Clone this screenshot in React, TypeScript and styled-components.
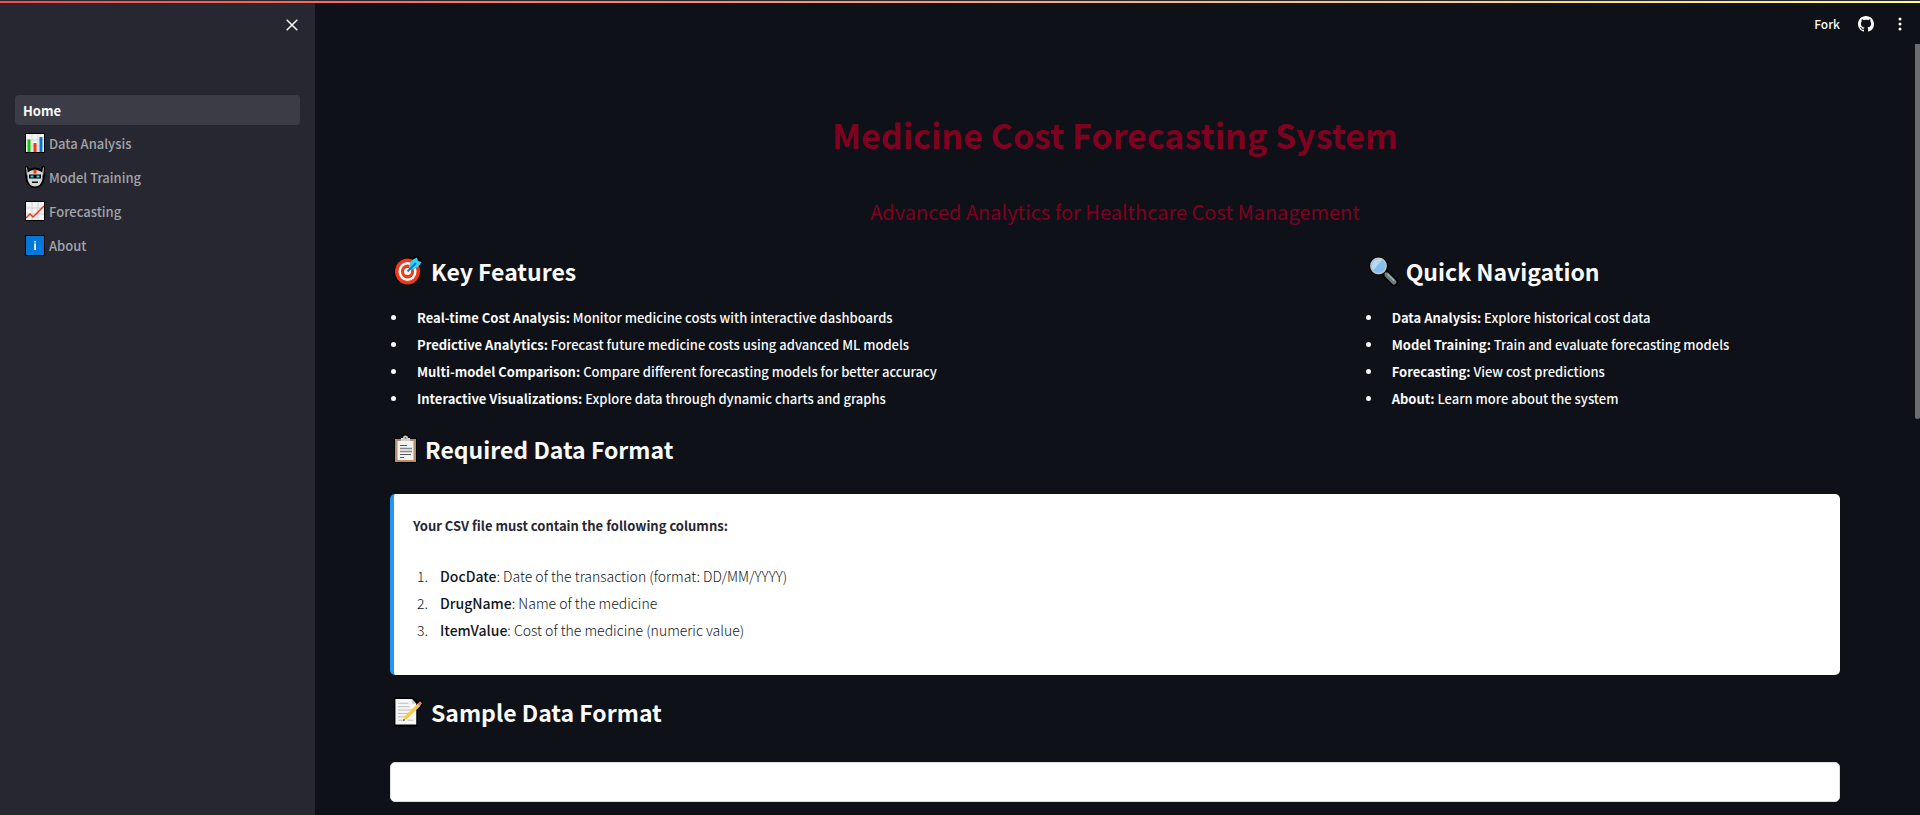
import React from "react";
import styled, { createGlobalStyle } from "styled-components";

const GlobalStyle = createGlobalStyle`
  * { box-sizing: border-box; }
  html, body, #root { height: 100%; }
  body {
    margin: 0;
    overflow: hidden;
    background: #0e1117;
    color: #fafafa;
    font-family: "Noto Sans CJK JP", "Noto Sans", sans-serif;
    font-size: 13px;
    font-weight: 500;
    line-height: 27px;
  }
  strong { font-weight: 700; }
`;

const Shell = styled.div`
  position: relative;
  display: flex;
  height: 100vh;
  overflow: hidden;
`;

const Decoration = styled.div`
  position: absolute;
  top: 0;
  left: 0;
  right: 0;
  height: 3px;
  border-top: 1px solid #262730;
  background: linear-gradient(90deg, #ff4b4b, #fffd80);
`;

const Sidebar = styled.aside`
  flex: 0 0 315px;
  padding: 14px 15px;
  background: #262730;
`;

const SidebarTop = styled.div`
  display: flex;
  justify-content: flex-end;
  height: 81px;
`;

const IconButton = styled.button`
  display: flex;
  align-items: center;
  justify-content: center;
  width: 16px;
  height: 22px;
  padding: 0;
  border: 0;
  background: none;
  color: #fafafa;
  cursor: pointer;
`;

const PageNav = styled.nav`
  display: flex;
  flex-direction: column;
  gap: 2px;
`;

const PageLink = styled.a<{ $active?: boolean }>`
  display: flex;
  align-items: center;
  gap: 4px;
  height: ${(p) => (p.$active ? 30 : 32)}px;
  padding: 0 ${(p) => (p.$active ? 8 : 10)}px;
  border-radius: 4px;
  background: ${(p) => (p.$active ? "#3c3c47" : "transparent")};
  color: ${(p) => (p.$active ? "#fafafa" : "#a3a4a9")};
  font-weight: ${(p) => (p.$active ? 700 : 500)};
  text-decoration: none;
`;

const Main = styled.main`
  flex: 1;
  min-width: 0;
  padding: 0 80px 0 75px;
`;

const Toolbar = styled.header`
  display: flex;
  align-items: center;
  justify-content: flex-end;
  gap: 18px;
  height: 48px;
  margin-right: -68px;
`;

const ForkButton = styled(IconButton)`
  width: auto;
  font: 500 12px/22px "Noto Sans CJK JP", "Noto Sans", sans-serif;
`;

const Title = styled.h1`
  margin: 64px 0 0;
  color: #800020;
  font-size: 34px;
  font-weight: 700;
  line-height: 46px;
  text-align: center;
`;

const Subtitle = styled.p`
  margin: 36px 0 0;
  color: #800020;
  font-size: 20px;
  font-weight: 400;
  line-height: 36px;
  text-align: center;
`;

const Columns = styled.div`
  display: grid;
  grid-template-columns: 2fr 1fr;
  gap: 24px;
  margin-top: 23px;
`;

const SectionTitle = styled.h2`
  display: flex;
  align-items: center;
  gap: 8px;
  height: 36px;
  margin: 0;
  padding-left: 4px;
  font-size: 23px;
  font-weight: 700;
  line-height: 36px;
`;

const FeatureList = styled.ul`
  margin: 15px 0 0;
  padding: 0;
  list-style: none;
`;

const FeatureItem = styled.li`
  display: flex;
  align-items: center;

  &::before {
    content: "";
    flex: none;
    width: 5px;
    height: 5px;
    margin: 0 21px 0 1px;
    border-radius: 50%;
    background: #fafafa;
  }
`;

const Block = styled.section`
  margin-top: 19px;
`;

const InfoCard = styled.div`
  margin-top: 27px;
  padding: 18px 19px 31px;
  border-left: 4px solid #2196f3;
  border-radius: 5px;
  background: #fff;
  color: #14151b;
`;

const CardLead = styled.p`
  margin: 0 0 24px;
  font-weight: 700;
  color: #262730;
`;

const ColumnList = styled.ol`
  margin: 0;
  padding: 0 0 0 4px;
  list-style: none;
  counter-reset: column;
  font-size: 14px;
  font-weight: 300;
`;

const ColumnItem = styled.li`
  display: flex;
  counter-increment: column;

  &::before {
    content: counter(column) ".";
    flex: 0 0 23px;
  }
`;

const ColumnName = styled.strong`
  font-weight: 500;
`;

const SampleCard = styled.div`
  height: 40px;
  margin-top: 32px;
  border: 1px solid #ddd;
  border-radius: 5px;
  background: #fff;
`;

const ScrollThumb = styled.div`
  position: absolute;
  top: 44px;
  right: 0;
  width: 5px;
  height: 46vh;
  border-radius: 0 0 3px 3px;
  background: #6b6c70;
`;

const ChartIcon = () => (
  <svg width="20" height="20" viewBox="0 0 20 20" aria-hidden="true">
    <rect width="20" height="20" rx="1" fill="#000" />
    <rect x="1" y="1" width="18" height="18" fill="#f3f3f3" />
    <path d="M7 1v18M13 1v18M1 7h18M1 13h18" stroke="#d8d8d8" />
    <path d="M2.500 6.500h3V19h-3z" fill="#16c60c" />
    <path d="M8.500 10h3v9h-3z" fill="#f03a17" />
    <path d="M14.500 4h3v15h-3z" fill="#0078d7" />
  </svg>
);

const RobotIcon = () => (
  <svg width="20" height="22" viewBox="0 0 20 22" aria-hidden="true">
    <path d="M0 0h3l1 3q6-3 12 0l1-3h3v9l-1 6q-2 7-9 7t-9-7L0 9z" fill="#000" />
    <path d="M1 1.500h1l1 6-1 3zM19 1.500h-1l-1 6 1 3z" fill="#c4c4c4" />
    <path d="M2.500 6.500Q10 1 17.500 6.500V13q-1.500 7.500-7.500 7.500T2.500 13z" fill="#d6d6d6" />
    <path d="M8.500 3.500h3v4h-3z" fill="#f03a17" />
    <path d="M4 8.500h12v4H4z" fill="#000" />
    <path d="M5.500 9.500h3v2h-3zM11.500 9.500h3v2h-3z" fill="#31d2f7" />
    <path d="M7 15.500h6v1.500H7z" fill="#111" />
  </svg>
);

const TrendIcon = () => (
  <svg width="20" height="20" viewBox="0 0 20 20" aria-hidden="true">
    <rect width="20" height="20" rx="1" fill="#000" />
    <rect x="1" y="1" width="18" height="18" fill="#f3f3f3" />
    <path d="M7 1v18M13 1v18M1 7h18M1 13h18" stroke="#d0d0d0" />
    <path d="M1 17l4-4 3 3L19 5" fill="none" stroke="#f03a17" strokeWidth="1.500" />
  </svg>
);

const InfoIcon = () => (
  <svg width="20" height="21" viewBox="0 0 20 21" aria-hidden="true">
    <rect width="20" height="21" rx="1" fill="#000" />
    <rect x="1" y="1" width="18" height="19" fill="#0078d7" />
    <path d="M9.200 6h1.700v1.500H9.200zM9.200 8.500h1.700v6.500H9.200z" fill="#fff" />
  </svg>
);

const TargetIcon = () => (
  <svg width="29" height="30" viewBox="0 0 29 30" aria-hidden="true">
    <path d="M14 1.500l9-1.500 3 1 2 4-3 5 1 8q-2 11-12 12Q1 29 0 16 2 3 14 1.500z" fill="#000" />
    <ellipse cx="13.500" cy="15.500" rx="12.500" ry="13" fill="#f03a17" />
    <ellipse cx="13.500" cy="15.500" rx="9" ry="9.500" fill="#fff" />
    <ellipse cx="13.500" cy="15.500" rx="6.500" ry="7" fill="#f03a17" />
    <circle cx="13.500" cy="15.500" r="3.500" fill="#fff" />
    <path d="M15 10q1-6 8-8.500l1 3.500 3.500 1Q25 12 18 13.500l-3-.5z" fill="#31d2f7" />
    <path d="M13.500 15.500L22 7" stroke="#0078d7" strokeWidth="1.800" />
  </svg>
);

const SearchIcon = () => (
  <svg width="29" height="30" viewBox="0 0 29 30" aria-hidden="true">
    <path d="M15 16l10 10" stroke="#000" strokeWidth="8" strokeLinecap="round" />
    <circle cx="9.500" cy="10" r="9.500" fill="#000" />
    <path d="M16 17l2 2" stroke="#aaa" strokeWidth="2" />
    <path d="M18 19l7 7" stroke="#6d7a7e" strokeWidth="5" strokeLinecap="round" />
    <path d="M18.500 18l7 7" stroke="#a4afb2" strokeWidth="1.500" />
    <circle cx="9.500" cy="10" r="7.700" fill="#83beec" stroke="#c9c9c9" strokeWidth="1.400" />
    <path d="M3 12Q2 4 10 3h4L4.500 14z" fill="#b3daf7" />
  </svg>
);

const ClipboardIcon = () => (
  <svg width="23" height="30" viewBox="0 0 23 30" aria-hidden="true">
    <path d="M0 4h7q1-4 4.500-4T16 4h7v25H0z" fill="#000" />
    <path d="M1 5h21v23H1z" fill="#b58f67" />
    <path d="M3.500 7h16v19h-16z" fill="#f2f2f2" />
    <path d="M7 7V4h2q0-2.500 2.500-2.500T14 4h2v3z" fill="#cfcfcf" />
    <circle cx="11.500" cy="4" r="1" fill="#777" />
    <path d="M6 11.500h7M6 20.500h11M6 23.500h4" stroke="#555" />
    <path d="M6 14.500h12M6 17.500h12" stroke="#888" strokeWidth="1.500" />
  </svg>
);

const MemoIcon = () => (
  <svg width="29" height="30" viewBox="0 0 30 30" aria-hidden="true">
    <path d="M0 0h21l3 4 3-2 3 2-1 4-5 6v16H0z" fill="#000" />
    <path d="M1.500 1.500h17l4.500 5V28h-21.500z" fill="#f7f7f7" />
    <path d="M18.500 1.500v5H23z" fill="#ccc" />
    <path d="M4 6h11M4 9.500h12M4 13h15M4 16.500h13M4 20h10M4 23.500h5M14 23.500h6" stroke="#bbb" />
    <path d="M9 24l2-4.500L25 6l2.500 2.500L13.500 22z" fill="#ffc83d" />
    <path d="M24.500 6.500L27 4l2 2-2.500 3z" fill="#d8837f" />
    <path d="M9 24.500l1-2.500 1.500 1.500z" fill="#555" />
  </svg>
);

const pages = [
  { label: "Data Analysis", Icon: ChartIcon },
  { label: "Model Training", Icon: RobotIcon },
  { label: "Forecasting", Icon: TrendIcon },
  { label: "About", Icon: InfoIcon },
];

const features = [
  ["Real-time Cost Analysis", "Monitor medicine costs with interactive dashboards"],
  ["Predictive Analytics", "Forecast future medicine costs using advanced ML models"],
  ["Multi-model Comparison", "Compare different forecasting models for better accuracy"],
  ["Interactive Visualizations", "Explore data through dynamic charts and graphs"],
];

const navigation = [
  ["Data Analysis", "Explore historical cost data"],
  ["Model Training", "Train and evaluate forecasting models"],
  ["Forecasting", "View cost predictions"],
  ["About", "Learn more about the system"],
];

const columns = [
  ["DocDate", "Date of the transaction (format: DD/MM/YYYY)"],
  ["DrugName", "Name of the medicine"],
  ["ItemValue", "Cost of the medicine (numeric value)"],
];

const Features = ({ items }: { items: string[][] }) => (
  <FeatureList>
    {items.map(([name, text]) => (
      <FeatureItem key={name}>
        <span>
          <strong>{name}:</strong> {text}
        </span>
      </FeatureItem>
    ))}
  </FeatureList>
);

export default function App() {
  return (
    <>
      <GlobalStyle />
      <Shell>
        <Sidebar>
          <SidebarTop>
            <IconButton aria-label="Close sidebar">
              <svg width="12" height="12" viewBox="0 0 12 12">
                <path d="M.7.7l10.600 10.600M11.300.7L.7 11.300" stroke="currentColor" strokeWidth="1.500" />
              </svg>
            </IconButton>
          </SidebarTop>
          <PageNav>
            <PageLink href="#home" $active>
              Home
            </PageLink>
            {pages.map(({ label, Icon }) => (
              <PageLink key={label} href={`#${label}`}>
                <Icon />
                {label}
              </PageLink>
            ))}
          </PageNav>
        </Sidebar>
        <Main>
          <Toolbar>
            <ForkButton>Fork</ForkButton>
            <IconButton aria-label="View source on GitHub">
              <svg width="16" height="16" viewBox="0 0 16 16" fill="currentColor">
                <path d="M8 0C3.580 0 0 3.580 0 8c0 3.540 2.290 6.530 5.470 7.590.4.070.55-.17.55-.38 0-.19-.01-.82-.01-1.490-2.010.37-2.530-.49-2.690-.94-.09-.23-.48-.94-.82-1.130-.28-.15-.68-.52-.01-.53.63-.01 1.080.58 1.230.82.72 1.210 1.870.87 2.330.66.07-.52.28-.87.51-1.070-1.780-.2-3.640-.89-3.640-3.950 0-.87.31-1.590.82-2.150-.08-.2-.36-1.020.08-2.120 0 0 .67-.21 2.200.82.64-.18 1.320-.27 2-.27s1.360.09 2 .27c1.530-1.040 2.200-.82 2.200-.82.44 1.100.16 1.920.08 2.120.51.56.82 1.270.82 2.150 0 3.070-1.870 3.750-3.650 3.950.29.25.54.73.54 1.480 0 1.070-.01 1.930-.01 2.200 0 .21.15.46.55.38A8.010 8.010 0 0 0 16 8c0-4.420-3.580-8-8-8z" />
              </svg>
            </IconButton>
            <IconButton aria-label="Main menu">
              <svg width="4" height="14" viewBox="0 0 4 14" fill="currentColor">
                <circle cx="2" cy="2" r="1.500" />
                <circle cx="2" cy="7" r="1.500" />
                <circle cx="2" cy="12" r="1.500" />
              </svg>
            </IconButton>
          </Toolbar>
          <Title>Medicine Cost Forecasting System</Title>
          <Subtitle>Advanced Analytics for Healthcare Cost Management</Subtitle>
          <Columns>
            <section>
              <SectionTitle>
                <TargetIcon />
                Key Features
              </SectionTitle>
              <Features items={features} />
            </section>
            <section>
              <SectionTitle>
                <SearchIcon />
                Quick Navigation
              </SectionTitle>
              <Features items={navigation} />
            </section>
          </Columns>
          <Block>
            <SectionTitle>
              <ClipboardIcon />
              Required Data Format
            </SectionTitle>
            <InfoCard>
              <CardLead>Your CSV file must contain the following columns:</CardLead>
              <ColumnList>
                {columns.map(([name, text]) => (
                  <ColumnItem key={name}>
                    <span>
                      <ColumnName>{name}</ColumnName>: {text}
                    </span>
                  </ColumnItem>
                ))}
              </ColumnList>
            </InfoCard>
          </Block>
          <Block>
            <SectionTitle>
              <MemoIcon />
              Sample Data Format
            </SectionTitle>
            <SampleCard />
          </Block>
        </Main>
        <ScrollThumb />
        <Decoration />
      </Shell>
    </>
  );
}
